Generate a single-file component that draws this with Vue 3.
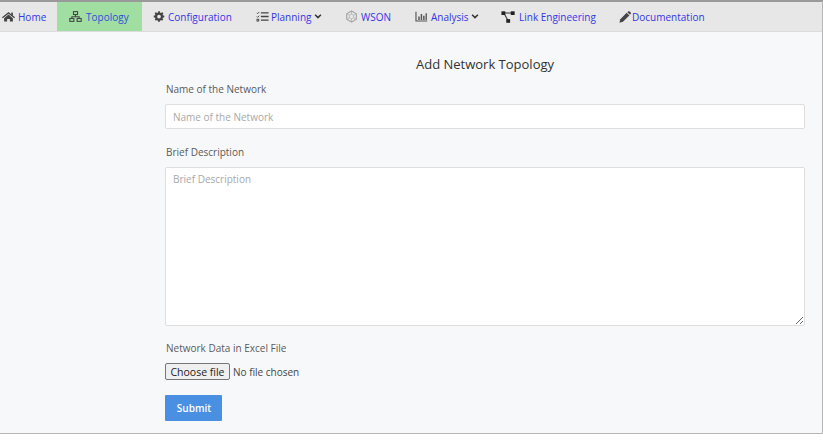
<script setup>
const items = [
  { label: 'Home', icon: 'home', w: 57 },
  { label: 'Topology', icon: 'topo', w: 85, active: true },
  { label: 'Configuration', icon: 'gear', w: 103 },
  { label: 'Planning', icon: 'list', w: 89, caret: true },
  { label: 'WSON', icon: 'hex', w: 70 },
  { label: 'Analysis', icon: 'chart', w: 86, caret: true },
  { label: 'Link Engineering', icon: 'link', w: 118 },
  { label: 'Documentation', icon: 'pen', w: 100 }
]
</script>

<template>
  <div class="frame">
    <nav class="nav">
      <a v-for="it in items" :key="it.label" class="item" :class="[{ active: it.active }, 'i-' + it.icon]" :style="{ width: it.w + 'px' }">
        <svg class="icon" viewBox="0 0 16 16">
          <g v-if="it.icon === 'home'" fill="#444">
            <path d="M8 2.4 0 9l1 1.2L8 4.5l7 5.7L16 9l-2.6-2.1V3h-2v2.2z" />
            <path d="M8 5.6 2.6 10v4.2h3.7V11h3.4v3.2h3.7V10z" />
          </g>
          <g v-else-if="it.icon === 'topo'" fill="none" stroke="#444" stroke-width="1.3">
            <rect x="5.5" y="2" width="5" height="3.6" />
            <rect x="1" y="10.4" width="5" height="3.6" />
            <rect x="10" y="10.4" width="5" height="3.6" />
            <path d="M8 5.6v2.6M3.5 10.4V8.2h9v2.2" />
          </g>
          <g v-else-if="it.icon === 'gear'">
            <circle cx="8" cy="8" r="4" fill="none" stroke="#444" stroke-width="3" />
            <path d="M8 1v14M1 8h14M3 3l10 10M13 3 3 13" stroke="#444" stroke-width="2.4" stroke-dasharray="3 8 3" />
          </g>
          <g v-else-if="it.icon === 'list'" fill="none" stroke="#444">
            <path d="M6 3.5h9.5M6 8h9.5M6 12.5h9.5" stroke-width="1.6" />
            <path d="M1 3.5l1 1 2-2M1 8l1 1 2-2" stroke-width="1.2" />
            <rect x="1.2" y="11.4" width="2.2" height="2.2" stroke-width="1.1" />
          </g>
          <g v-else-if="it.icon === 'hex'" fill="none" stroke="#a6a6a6">
            <path d="M8 1.2 13.9 4.6v6.8L8 14.8 2.1 11.4V4.6z" stroke-width="1.4" />
            <path d="M8 5 10.6 6.5v3L8 11 5.4 9.5v-3zM8 1.2V5M13.9 4.6 10.6 6.5M13.9 11.4l-3.3-1.9M8 14.8V11M2.1 11.4l3.3-1.9M2.1 4.6l3.3 1.9" stroke-width=".8" />
          </g>
          <g v-else-if="it.icon === 'chart'">
            <path d="M1.2 2v11.6H15" fill="none" stroke="#555" stroke-width="1.4" />
            <path d="M4 8h1.8v4.4H4zM7 5h1.8v7.4H7zM10 7h1.8v5.4H10zM13 4h1.6v8.4H13z" fill="#555" />
          </g>
          <g v-else-if="it.icon === 'link'">
            <path d="M3 3.5h10M3.5 4l4.5 8" stroke="#333" stroke-width="1.2" />
            <rect x=".5" y="1.5" width="4.4" height="4.2" fill="#222" />
            <rect x="11.2" y="1.5" width="4.4" height="4.2" fill="#222" />
            <rect x="6" y="10.4" width="4.4" height="4.2" fill="#222" />
          </g>
          <g v-else fill="#444">
            <path d="M10.2 2.4 13.8 6 5.2 14.4.6 15.6l1.2-4.6z" />
            <path d="M11.2 1.5 12.3.5a1.3 1.3 0 0 1 1.8 0l1.5 1.5a1.3 1.3 0 0 1 0 1.8l-1 1.1z" />
          </g>
        </svg>
        <span class="label">{{ it.label }}</span>
        <svg v-if="it.caret" class="caret" viewBox="0 0 10 8"><path d="M1.4 1.8 5 5.4l3.6-3.6" fill="none" stroke="#333" stroke-width="1.9" /></svg>
      </a>
    </nav>

    <main class="form">
      <h1 class="title">Add Network Topology</h1>
      <label class="lbl first">Name of the Network</label>
      <input class="field input" placeholder="Name of the Network" />
      <label class="lbl second">Brief Description</label>
      <textarea class="field area" placeholder="Brief Description"></textarea>
      <label class="lbl third">Network Data in Excel File</label>
      <div class="filerow">
        <button class="choose" type="button">Choose file</button>
        <span class="nofile">No file chosen</span>
      </div>
      <button class="submit" type="button">Submit</button>
    </main>
  </div>
</template>

<style scoped>
.frame {
  box-sizing: border-box;
  width: 823px;
  height: 434px;
  border-top: 2px solid #9a9a9a;
  border-right: 1px solid #b5b5b5;
  border-bottom: 1px solid #b5b5b5;
  background: #f7f8fa;
  font-family: "Open Sans", "Noto Sans", sans-serif;
  overflow: hidden;
}
.nav {
  display: flex;
  height: 29px;
  background: #e7e7e7;
  border-bottom: 1px solid #dcdcdc;
}
.item {
  box-sizing: border-box;
  display: flex;
  align-items: center;
  padding-left: 11px;
  color: #3535e6;
  font-size: 10px;
  white-space: nowrap;
}
.item:first-child { padding-left: 2px; }
.active { background: #a0dea2; color: #2f4fd8; padding-left: 12px; }
.icon { width: 13px; height: 13px; margin-right: 3px; flex: none; }
.active .icon { margin-right: 4px; }
.i-gear .icon { width: 12px; }
.i-list .icon { margin-right: 2px; }
.i-pen .icon { width: 12px; height: 12px; margin-right: 1px; }
.i-link .icon { width: 14px; height: 14px; margin-right: 4px; }
.caret { width: 8px; height: 7px; margin-left: 3px; }
.i-chart .caret { margin-left: 2px; }
.form {
  display: flex;
  flex-direction: column;
  align-items: flex-start;
  padding: 0 17px 0 165px;
}
.title {
  align-self: center;
  margin: 23px 0 0;
  font-size: 13px;
  line-height: 18px;
  font-weight: 400;
  color: #333;
}
.lbl { color: #5a5a5a; font-size: 10px; line-height: 14px; margin-left: 1px; }
.first { margin-top: 9px; }
.second { margin-top: 16px; }
.third { margin-top: 15px; }
.field {
  box-sizing: border-box;
  width: 640px;
  border: 1px solid #dedede;
  border-radius: 2px;
  background: #fff;
  font-family: inherit;
  font-size: 10px;
  padding: 0 7px;
  outline: none;
}
.field::placeholder { color: #a8a8a8; opacity: 1; }
.input { height: 25px; margin-top: 8px; }
.area { height: 159px; margin-top: 8px; padding-top: 4px; display: block; }
.filerow { display: flex; align-items: center; margin-top: 8px; }
.choose {
  box-sizing: border-box;
  width: 65px;
  height: 17px;
  padding: 0;
  border: 1px solid #767676;
  border-radius: 2px;
  background: #efefef;
  font-family: inherit;
  font-size: 10.5px;
  color: #222;
}
.nofile { margin-left: 3px; font-size: 10px; color: #444; }
.submit {
  box-sizing: border-box;
  width: 57px;
  height: 26px;
  margin-top: 15px;
  padding: 0 0 0 1px;
  border: none;
  border-radius: 1px;
  background: #4a90e2;
  color: #fff;
  font-family: inherit;
  font-size: 10px;
  font-weight: 600;
}
</style>
<style>
html, body { margin: 0; background: #fff; }
</style>
